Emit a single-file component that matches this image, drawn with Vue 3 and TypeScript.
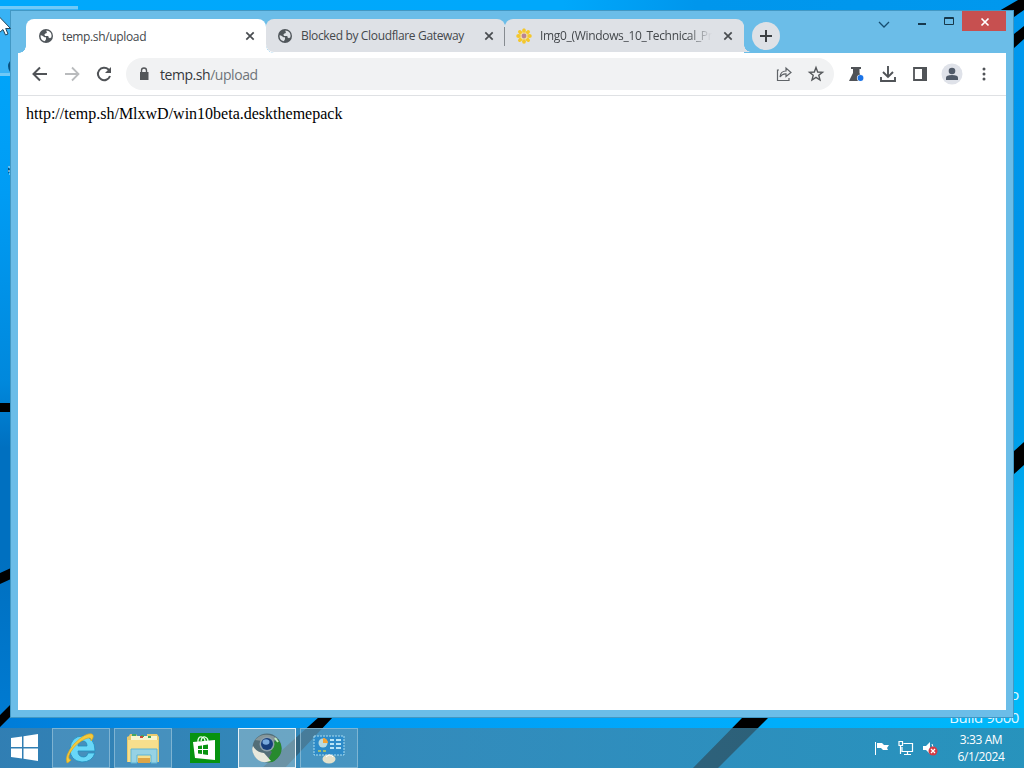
<script setup lang="ts">
interface Tab { title: string; icon: 'globe' | 'flower'; kind: string }
const tabs: Tab[] = [
  { title: 'temp.sh/upload', icon: 'globe', kind: 'active' },
  { title: 'Blocked by Cloudflare Gateway', icon: 'globe', kind: 'second' },
  { title: 'Img0_(Windows_10_Technical_Pr', icon: 'flower', kind: 'third' },
]
const petals = [0, 45, 90, 135, 180, 225, 270, 315]
</script>

<template>
  <div class="desktop">
    <svg class="wallpaper" width="1024" height="768" viewBox="0 0 1024 768">
      <defs>
        <linearGradient id="top" x1="0" x2="1" y1="0" y2="0">
          <stop offset="0" stop-color="#00a8fc" /><stop offset=".55" stop-color="#00a8fb" />
          <stop offset=".68" stop-color="#0096ec" /><stop offset="1" stop-color="#0098ee" />
        </linearGradient>
        <linearGradient id="left" x1="0" x2="0" y1="0" y2="1">
          <stop offset="0" stop-color="#00a8fc" /><stop offset=".25" stop-color="#009cf4" />
          <stop offset=".51" stop-color="#0088dc" /><stop offset=".6" stop-color="#0070c0" />
          <stop offset=".75" stop-color="#0070c0" /><stop offset="1" stop-color="#007cd4" />
        </linearGradient>
        <linearGradient id="right" x1="0" x2="0" y1="0" y2="1">
          <stop offset="0" stop-color="#0098ee" /><stop offset=".3" stop-color="#0095e9" />
          <stop offset=".59" stop-color="#009ee9" /><stop offset=".75" stop-color="#00b3f3" />
          <stop offset="1" stop-color="#00baf9" />
        </linearGradient>
        <linearGradient id="bottom" x1="0" x2="1" y1="0" y2="0">
          <stop offset="0" stop-color="#007cd8" /><stop offset=".3" stop-color="#0097f0" />
          <stop offset=".65" stop-color="#00a9fc" /><stop offset="1" stop-color="#00b9f9" />
        </linearGradient>
      </defs>
      <rect width="1024" height="768" fill="url(#top)" />
      <rect width="14" height="728" y="11" fill="url(#left)" />
      <rect x="1010" y="11" width="14" height="717" fill="url(#right)" />
      <rect y="714" width="1024" height="54" fill="url(#bottom)" />
      <path d="M999 11 1018 0H1024V10L1014 17H999ZM1014 34 1024 26V39L1014 48ZM1014 451 1024 442V465L1014 474ZM0 403H11V412H0ZM0 573 11 568V579L0 584ZM0 715 11 704V716L0 727ZM319 717H333L285 768H262ZM742 718H768L718 768H693Z" fill="#000" />
      <rect y="6" width="78" height="68" fill="#38b2f5" />
      <path d="M0 7.500H78M0 74.500H11" stroke="#70c9f7" stroke-width="3" fill="none" />
      <path d="M10 61Q6 66 10 72ZM8 166L10 170 8 174" fill="#08507f" />
      <path d="M8 167H11M8 171H11M9 174H11" stroke="#c9ecff" />
    </svg>
    <div class="watermark"><span>Windows 8.1 Pro</span><span>Build 9600</span></div>

    <section class="window">
      <header class="titlebar">
        <div v-for="tab in tabs" :key="tab.title" class="tab" :class="tab.kind">
          <svg v-if="tab.icon === 'globe'" class="favicon" width="16" height="16" viewBox="0 0 16 16">
            <circle cx="8" cy="8" r="7" fill="#50565b" />
            <path d="M2.600 7.300 4 7.500 6.500 9.300H8V11.300L6.800 13.300A5.500 5.500 0 0 1 2.600 7.300ZM8.300 2.500 10.500 3.100A5.500 5.500 0 0 1 13.400 9.200L12 10.200 10.600 9.600 10.300 7.900H7.200L6.300 6.700 7.400 5.400 8.900 5Z" :fill="tab.kind === 'active' ? '#fff' : '#dee1e6'" />
          </svg>
          <svg v-else class="favicon" width="16" height="16" viewBox="0 0 16 16">
            <ellipse v-for="angle in petals" :key="angle" cx="8" cy="2.700" rx="1.900" ry="2.500" fill="#f4c72d" :transform="`rotate(${angle} 8 8)`" />
            <circle cx="8" cy="8" r="3.500" fill="#f3dda1" /><circle cx="8" cy="8" r="2.400" fill="#b88394" />
          </svg>
          <span class="tab-title">{{ tab.title }}</span>
          <svg class="tab-close" width="10" height="10" viewBox="0 0 10 10"><path d="M1.300 1.300 8.700 8.700M8.700 1.300 1.300 8.700" stroke="#484c50" stroke-width="1.700" /></svg>
        </div>
        <button class="new-tab" aria-label="New tab"><svg width="14" height="14"><path d="M7 1V13M1 7H13" stroke="#3d4043" stroke-width="2" /></svg></button>
        <svg class="controls" width="134" height="24" viewBox="0 0 134 24">
          <path d="M7 11 12 16 17 11" fill="none" stroke="#164d70" stroke-width="1.300" />
          <path d="M46 13H54" stroke="#17394e" stroke-width="2" />
          <path d="M72.500 6.500H81.500V13.500H72.500ZM72 7.500H82" fill="none" stroke="#17384a" />
          <path d="M90 0H134V20H90Z" fill="#c75050" />
          <path d="M109.500 7.500 116.500 14.500M116.500 7.500 109.500 14.500" stroke="#fff" stroke-width="1.700" />
        </svg>
      </header>
      <nav class="toolbar">
        <svg class="nav-icon" width="20" height="20" viewBox="0 0 20 20"><path d="M17 10H4M10 3.500 3.500 10 10 16.500" fill="none" stroke="#505357" stroke-width="2" /></svg>
        <svg class="nav-icon" width="20" height="20" viewBox="0 0 20 20"><path d="M3 10H16M10 3.500 16.500 10 10 16.500" fill="none" stroke="#b9bbbd" stroke-width="1.800" /></svg>
        <svg class="nav-icon" width="20" height="20" viewBox="0 0 20 20"><path d="M16 12A6.200 6.200 0 1 1 14.500 5.500L16 7" fill="none" stroke="#505357" stroke-width="2" /><path d="M17 3V9H11Z" fill="#505357" /></svg>
        <div class="address">
          <svg width="12" height="16" viewBox="0 0 12 16"><path d="M3.500 7V4.500A2.500 2.500 0 0 1 8.500 4.500V7" fill="none" stroke="#54575a" stroke-width="1.400" /><path d="M2 6H10.500V14H2Z" fill="#54575a" /></svg>
          <span class="url">temp.sh<i>/upload</i></span>
          <svg class="share" width="18" height="18" viewBox="0 0 18 18" fill="none" stroke="#606468" stroke-width="1.200"><path d="M4 5H2.500V15.500H14V13" /><path d="M5 12Q5.500 6 11 6V3L16 7.500 11 11.500V8.800Q7 8.500 5 12Z" /></svg>
          <svg width="18" height="18" viewBox="0 0 18 18"><path d="M9 2.500 10.700 7 15.500 7.300 11.800 10.300 13 15 9 12.400 5 15 6.200 10.300 2.500 7.300 7.300 7Z" fill="none" stroke="#55585b" stroke-width="1.400" /></svg>
        </div>
        <div class="actions">
          <svg width="20" height="20" viewBox="0 0 20 20"><path d="M5 3H15V5H13.500V9L17 17H3L7 9V5H5Z" fill="#505357" /><circle cx="14.500" cy="14" r="3.600" fill="#f4f7fb" /><circle cx="14.500" cy="14" r="2.900" fill="#1a73e8" /></svg>
          <svg width="20" height="20" viewBox="0 0 20 20"><path d="M10 2V13M5 8 10 13 15 8M3 13V17H17V13" fill="none" stroke="#505357" stroke-width="1.900" /></svg>
          <svg width="20" height="20" viewBox="0 0 20 20"><path d="M4 4H16V16H4Z" fill="none" stroke="#505357" stroke-width="1.800" /><path d="M12 3H17V17H12Z" fill="#505357" /></svg>
          <svg width="22" height="22" viewBox="0 0 22 22"><circle cx="11" cy="11" r="10.500" fill="#dfe2e9" /><circle cx="11" cy="8" r="3.300" fill="#505a68" /><path d="M5 17V14.500Q5 12 11 12T17 14.500V17Z" fill="#505a68" /></svg>
          <svg width="20" height="20" viewBox="0 0 20 20" fill="#505357"><circle cx="10" cy="5" r="1.500" /><circle cx="10" cy="10" r="1.500" /><circle cx="10" cy="15" r="1.500" /></svg>
        </div>
      </nav>
      <main class="page">http://temp.sh/MlxwD/win10beta.deskthemepack</main>
    </section>

    <footer class="taskbar">
      <div class="start"><svg width="28" height="28" viewBox="0 0 28 28" fill="#fff"><path d="M0 4 11 2.500V13H0ZM12.500 2.200 27 0V13H12.500ZM0 14.500H11V24.500L0 23ZM12.500 14.500H27V27L12.500 24.800Z" /></svg></div>
      <div class="task running"><svg width="34" height="34" viewBox="0 0 34 34">
        <path d="M31 22Q28 31 18 31Q6 30 6 18Q7 5 19 5Q31 6 31 20H14Q14 26 20 26Q23 26 24 22ZM14 15H23Q23 10 18.500 10T14 15Z" fill="#68d7f8" stroke="#218dbc" stroke-width=".8" />
        <path d="M3 32Q0 25 10 13Q22 1 28 3Q31 5 27 10Q28 5 21 8Q12 12 6 22Q3 28 7 29Q4 32 3 32Z" fill="#f4ca3d" stroke="#dca91d" stroke-width=".7" />
      </svg></div>
      <div class="task running"><svg width="34" height="34" viewBox="0 0 34 34">
        <path d="M3 5 4 3H10L12 6H21V3H31L33 6V31H1V6Z" fill="#e7c96e" />
        <path d="M5 5H31V9H5Z" fill="#f8f5cf" /><path d="M2 9H32V31H2Z" fill="#f7df8d" />
        <path d="M6 4H10M15 5H18M22 6H25" stroke="#42a762" stroke-width="2" /><path d="M14 6H17" stroke="#c74f39" stroke-width="2" />
        <path d="M5 18H31V32H25V24H11V32H5Z" fill="#96d2e4" stroke="#5eb5d5" /><path d="M12 27H24V32H12Z" fill="#dda547" />
      </svg></div>
      <div class="task"><svg width="30" height="30" viewBox="0 0 30 30">
        <path d="M0 0H30V30H0Z" fill="#079310" /><path d="M8 9V7Q9 3 12 4T15 8M11 8Q12 3 15 4T18 8" fill="none" stroke="#e8ffe8" stroke-width="1.300" />
        <path d="M3 9 25 7V27L5 25Z" fill="#fff" /><path d="M8 13 12 12.500V16H8ZM13 12.300 18 11.500V16H13ZM8 17H12V21L8 20.500ZM13 17H18V22L13 21.200Z" fill="#079310" />
      </svg></div>
      <div class="task current"><svg width="32" height="32" viewBox="0 0 32 32">
        <circle cx="16" cy="16" r="14.500" fill="#536e78" /><path d="M16 16 27 7Q33 15 29 23Q23 32 16 30L21 20Z" fill="#278a2e" />
        <path d="M2 14Q6 21 13 21L20 29Q8 33 3 23Q0 18 2 14Z" fill="#e7e8dc" /><path d="M4 8Q11 0 22 4L27 7 19 10Z" fill="#87979a" />
        <circle cx="16" cy="12" r="7.500" fill="#8ca0ac" /><circle cx="16" cy="12" r="6" fill="#163e7c" /><ellipse cx="15" cy="10" rx="3.500" ry="2.700" fill="#78a9dd" /><path d="M24 6 27 10" stroke="#c0ebc0" stroke-width="2" />
      </svg></div>
      <div class="task running settings"><svg width="34" height="32" viewBox="0 0 34 32">
        <path d="M2 4H32V23H2Z" fill="#2d8bc9" stroke="#a7dcf2" stroke-dasharray="2 1" /><circle cx="11" cy="11" r="4.500" fill="#b9d9df" /><path d="M11 11V6A5 5 0 0 1 16 11Z" fill="#f5a335" />
        <path d="M18 8H22M18 12H22M18 16H22M24 8H29M24 12H29M24 16H29" stroke="#b8e4f6" stroke-width="2" /><path d="M6 19H9M11 19H14" stroke="#9bbd74" stroke-width="2" />
        <ellipse cx="17" cy="27" rx="6.500" ry="4.500" fill="#e4e1ca" /><path d="M14 25Q18 21 21 25" fill="none" stroke="#fff" />
      </svg></div>
      <div class="tray">
        <svg width="18" height="18" viewBox="0 0 18 18"><path d="M2.500 3V16" stroke="#fff" /><path d="M4 4H9L11 6H16L14 9 15 11H10L8 9H4Z" fill="#fff" /></svg>
        <svg width="18" height="18" viewBox="0 0 18 18" fill="none" stroke="#fff" stroke-width="1.200"><path d="M6.500 4.500H15.500V12.500H5V8M10.500 13V15.500M7 15.500H14M2 2.500H5.500V6.500H2ZM3.500 7V15" /></svg>
        <svg width="18" height="18" viewBox="0 0 18 18"><path d="M2 7H5L9 3V15L5 11H2Z" fill="#fff" /><path d="M11 5Q13 8 11 11" fill="none" stroke="#fff" /><circle cx="12" cy="12" r="4.500" fill="#d43b44" /><path d="M10 10 14 14M14 10 10 14" stroke="#fff" stroke-width="1.300" /></svg>
      </div>
      <div class="clock"><span>3:33 AM</span><span>6/1/2024</span></div>
    </footer>
    <svg class="cursor" width="12" height="20" viewBox="0 0 12 20"><path d="M.5 1V16.500L4 13.500 6.500 19 9 18 6.700 12.500H11.500Z" fill="#fff" stroke="#23455b" /></svg>
  </div>
</template>

<style>
html, body { overflow: hidden; }
</style>
<style scoped>
* { box-sizing: border-box; }
svg { display: block; flex: none; }
.desktop { position: relative; width: 1024px; height: 768px; overflow: hidden; font-family: "Open Sans", "Noto Sans", sans-serif; }
.wallpaper { position: absolute; inset: 0; }
.watermark { position: absolute; right: 5px; top: 683px; display: flex; flex-direction: column; align-items: flex-end; color: #e0f6ff; font-size: 15px; line-height: 23px; letter-spacing: -.4px; }
.window { position: absolute; left: 10px; top: 10px; width: 1004px; height: 708px; padding: 0 7px 7px; background: #6bbde8; border: 1px solid #4298c4; display: flex; flex-direction: column; }
.titlebar { height: 42px; padding: 8px 0 0 8px; display: flex; flex: none; position: relative; }
.tab { position: relative; height: 33px; display: flex; align-items: center; padding: 0 11px; color: #44484c; background: #dee1e6; font-size: 12px; flex: none; }
.active { width: 240px; height: 34px; padding-left: 12px; background: #fff; border-radius: 8px 8px 0 0; z-index: 1; }
.active::before, .active::after { content: ""; position: absolute; bottom: 0; width: 7px; height: 7px; }
.active::before { left: -7px; background: radial-gradient(circle at 0 0, transparent 6.5px, #fff 7px); }
.active::after { right: -7px; background: radial-gradient(circle at 100% 0, transparent 6.5px, #fff 7px); }
.second { width: 239px; border-radius: 8px 8px 0 8px; box-shadow: 0 1px #fff; }
.second::after { content: ""; position: absolute; right: 0; top: 8px; height: 19px; border-right: 1px solid #868b90; }
.third { width: 239px; border-radius: 8px 8px 0 0; box-shadow: 0 1px #fff; }
.third::after { content: ""; position: absolute; left: 100%; bottom: 0; width: 7px; height: 7px; background: radial-gradient(circle at 100% 0, transparent 6.5px, #dee1e6 7px); }
.favicon { margin-right: 8px; }
.tab-title { width: 172px; overflow: hidden; white-space: nowrap; letter-spacing: -.35px; }
.third .tab-title { letter-spacing: -.32px; mask-image: linear-gradient(90deg, #000 86%, transparent 100%); }
.tab-close { margin-left: auto; }
.new-tab { width: 28px; height: 28px; border: 0; border-radius: 50%; padding: 7px; margin: 3px 0 0 8px; background: #dee1e6; }
.controls { position: absolute; right: 0; top: 0; }
.toolbar { height: 43px; background: #fff; border-bottom: 1px solid #dfe1e4; display: flex; align-items: center; padding: 0 12px; flex: none; }
.nav-icon { margin-right: 12px; }
.address { width: 709px; height: 32px; border-radius: 16px; background: #f1f2f3; display: flex; align-items: center; padding: 0 9px 0 12px; }
.url { margin-left: 10px; font-size: 14px; letter-spacing: -.45px; color: #35383b; }
.url i { color: #70757a; font-style: normal; }
.share { margin-left: auto; margin-right: 14px; }
.actions { display: flex; align-items: center; gap: 12px; margin-left: 12px; }
.actions svg:nth-child(4) { margin: 0 -1px; }
.page { background: #fff; flex: 1; padding: 9px 8px; font: 16px/18px "Liberation Serif", "Times New Roman", serif; color: #000; }
.taskbar { position: absolute; left: 0; right: 0; bottom: 0; height: 40px; background: linear-gradient(90deg, rgba(61,127,170,.8), rgba(67,134,170,.76) 40%, rgba(56,131,163,.7)); display: flex; align-items: stretch; color: #fff; }
.start { width: 52px; padding: 6px 0 0 11px; }
.task { width: 58px; margin-right: 4px; display: flex; align-items: center; justify-content: center; border: 1px solid transparent; }
.running { background: #76afd04d; border-color: #a4cce099; }
.current { background: #b5ccd170; border-color: #e7f1f6; }
.tray { display: flex; align-items: center; gap: 6px; margin-left: auto; margin-right: 17px; }
.clock { width: 50px; margin-right: 18px; display: flex; flex-direction: column; justify-content: center; align-items: center; font-size: 12px; line-height: 17px; letter-spacing: -.4px; white-space: nowrap; }
.cursor { position: absolute; left: -1px; top: 16px; }
</style>
